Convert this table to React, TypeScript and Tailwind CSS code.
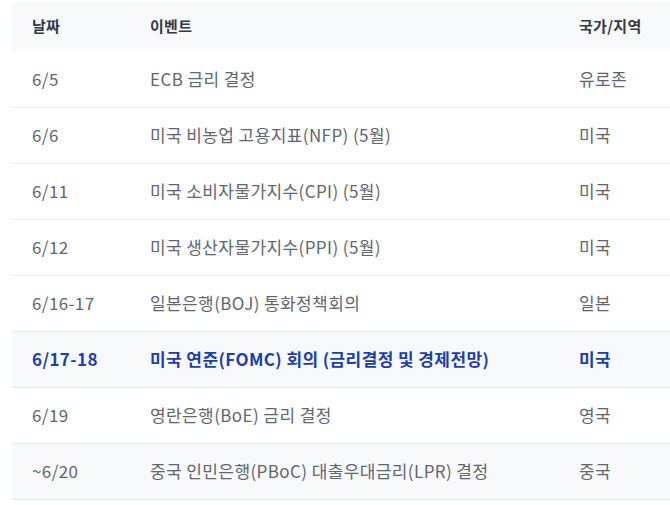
import React from "react";

const rows: { d: string; e: string; c: string; hl?: boolean; gray?: boolean }[] = [
  { d: "6/5", e: "ECB 금리 결정", c: "유로존" },
  { d: "6/6", e: "미국 비농업 고용지표(NFP) (5월)", c: "미국" },
  { d: "6/11", e: "미국 소비자물가지수(CPI) (5월)", c: "미국" },
  { d: "6/12", e: "미국 생산자물가지수(PPI) (5월)", c: "미국" },
  { d: "6/16-17", e: "일본은행(BOJ) 통화정책회의", c: "일본" },
  { d: "6/17-18", e: "미국 연준(FOMC) 회의 (금리결정 및 경제전망)", c: "미국", hl: true },
  { d: "6/19", e: "영란은행(BoE) 금리 결정", c: "영국" },
  { d: "~6/20", e: "중국 인민은행(PBoC) 대출우대금리(LPR) 결정", c: "중국", gray: true },
];

export default function App() {
  return (
    <div
      className="w-[670px] h-[505px] overflow-hidden bg-white pt-[2px] pl-[12px]"
      style={{ fontFamily: '"Noto Sans CJK KR", "Noto Sans", sans-serif' }}
    >
      <table className="w-[680px] border-collapse table-fixed">
        <colgroup>
          <col className="w-[118px]" />
          <col className="w-[429px]" />
          <col />
        </colgroup>
        <thead>
          <tr className="bg-[#f8f9fb] h-[49px]">
            <th className="text-left pl-[20px] text-[15px] tracking-[0.3px] font-bold text-[#333a45]">날짜</th>
            <th className="text-left pl-[20px] text-[15px] tracking-[0.3px] font-bold text-[#333a45]">이벤트</th>
            <th className="text-left pl-[20px] text-[15px] tracking-[0.3px] font-bold text-[#333a45]">국가/지역</th>
          </tr>
        </thead>
        <tbody>
          {rows.map((r) => (
            <tr
              key={r.d}
              className={
                "h-[56px] border-b border-[#e6e8eb] " +
                (r.hl || r.gray ? "bg-[#f8f9fb]" : "bg-white")
              }
            >
              <td
                className={
                  "pl-[20px] text-[17px] tracking-[0.4px] whitespace-nowrap " +
                  (r.hl ? "font-bold text-[#1d3fa6]" : "text-[#5f6670]")
                }
              >
                {r.d}
              </td>
              <td
                className={
                  "pl-[20px] text-[17px] tracking-[0.4px] whitespace-nowrap " +
                  (r.hl ? "font-bold text-[#1d3fa6]" : "text-[#5f6670]")
                }
              >
                {r.e}
              </td>
              <td
                className={
                  "pl-[20px] text-[17px] tracking-[0.4px] whitespace-nowrap " +
                  (r.hl ? "font-bold text-[#1d3fa6]" : "text-[#5f6670]")
                }
              >
                {r.c}
              </td>
            </tr>
          ))}
        </tbody>
      </table>
    </div>
  );
}
